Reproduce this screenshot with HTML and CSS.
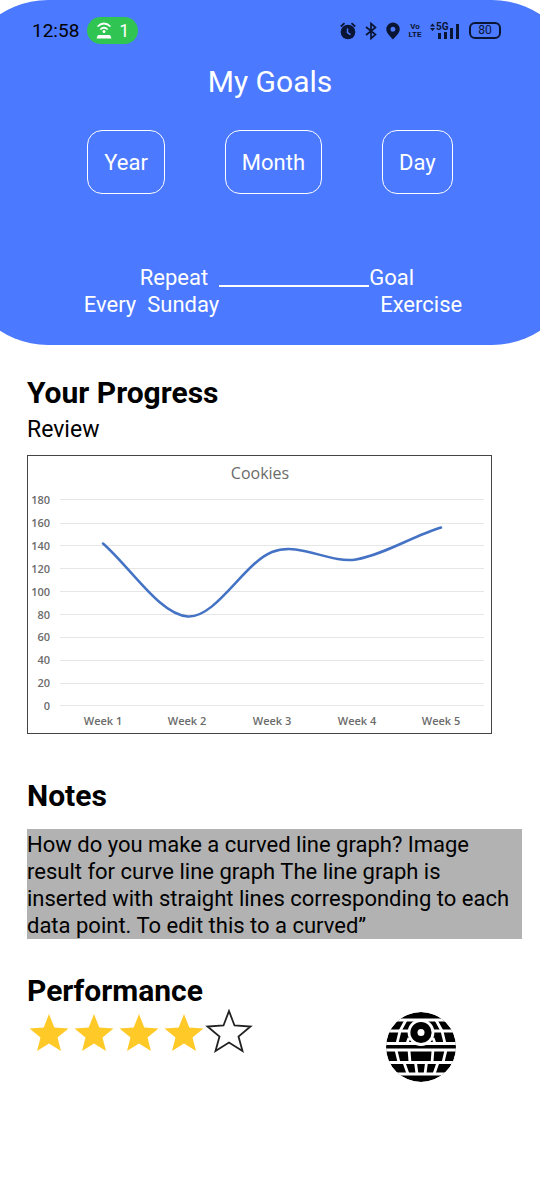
FILE: index.html
```html
<!DOCTYPE html>
<html lang="en">
<head>
<meta charset="utf-8">
<meta name="viewport" content="width=device-width, initial-scale=1">
<title>My Goals</title>
<link rel="stylesheet" href="styles.css">
</head>
<body>
<header class="hero">
  <div class="status">
    <span class="clock">12:58</span>
    <span class="hotspot">
      <svg width="16" height="17" viewBox="0 0 16 17" fill="none" stroke="#fff" stroke-width="1.700" aria-hidden="true">
        <path d="M1.500 4.500Q8-1.500 14.500 4.500M4.300 7.500Q8 4 11.700 7.500"/>
        <circle cx="8" cy="9.500" r="1.500" fill="#fff" stroke="none"/>
        <path d="M2 13h12l1.500 3.500H.5Z" fill="#fff" stroke="none"/>
      </svg>
      <span>1</span>
    </span>
    <div class="indicators">
      <svg width="16" height="18" viewBox="0 0 16 18" aria-hidden="true">
        <circle cx="8" cy="10" r="7.300" fill="#0a1533"/>
        <path d="M.8 4.500 4.500 1.200M15.200 4.500 11.500 1.200" stroke="#0a1533" stroke-width="1.800"/>
        <path d="M7.500 6.500v4l3 2.200" fill="none" stroke="#4b79ff" stroke-width="1.500"/>
      </svg>
      <svg width="12" height="18" viewBox="0 0 12 18" aria-hidden="true">
        <path d="M1 5 10.500 12.500 6 16.500V1.500L10.500 5.500 1 13" fill="none" stroke="#0a1533" stroke-width="1.700"/>
      </svg>
      <svg width="14" height="18" viewBox="0 0 14 18" aria-hidden="true">
        <path d="M7 .5a6.700 6.700 0 0 1 6.700 6.700C13.700 11 10 14 7 17.500 4 14 .3 11 .3 7.200A6.700 6.700 0 0 1 7 .5Zm0 4.200a2.500 2.500 0 1 0 0 5 2.500 2.500 0 0 0 0-5Z" fill="#0a1533"/>
      </svg>
      <span class="volte"><span>Vo</span><span>LTE</span></span>
      <svg class="signal" width="30" height="18" viewBox="0 0 30 18" aria-hidden="true">
        <path d="M0 4.500 2.500 1.500 5 4.500ZM0 6 2.500 9 5 6Z" fill="#0a1533"/>
        <text x="6" y="8">5G</text>
        <path d="M8 11h3v6H8ZM14 10h3v7h-3ZM20 6h3v11h-3ZM26 2h3v15h-3Z" fill="#0a1533"/>
      </svg>
      <span class="battery">80</span>
    </div>
  </div>
  <h1 class="title">My Goals</h1>
  <nav class="periods" aria-label="Period">
    <button class="period" type="button">Year</button>
    <button class="period" type="button">Month</button>
    <button class="period" type="button">Day</button>
  </nav>
  <div class="plan">
    <div class="plan-repeat"><div class="plan-label">Repeat</div><div>Every&nbsp; Sunday</div></div>
    <div class="plan-line"></div>
    <div><div>Goal</div><div class="plan-value">Exercise</div></div>
  </div>
</header>

<main class="content">
  <section class="progress">
    <h2 class="heading">Your Progress</h2>
    <p class="review">Review</p>
    <svg class="chart" viewBox="0 0 463 277" role="img" aria-label="Cookies by week">
      <path class="grid" d="M32 43.500H456M32 67.500H456M32 89.500H456M32 112.500H456M32 135.500H456M32 158.500H456M32 181.500H456M32 204.500H456M32 227.500H456M32 249.500H456"/>
      <text class="chart-title" x="232" y="23">Cookies</text>
      <g class="values">
        <text x="22" y="48">180</text><text x="22" y="71">160</text><text x="22" y="94">140</text><text x="22" y="117">120</text><text x="22" y="140">100</text><text x="22" y="163">80</text><text x="22" y="185">60</text><text x="22" y="208">40</text><text x="22" y="231">20</text><text x="22" y="254">0</text>
      </g>
      <g class="weeks">
        <text x="75" y="269">Week 1</text><text x="159" y="269">Week 2</text><text x="244" y="269">Week 3</text><text x="329" y="269">Week 4</text><text x="413" y="269">Week 5</text>
      </g>
      <path class="curve" d="M75 87.500C103 112 132 159 160 160.500S216 107 244 96 301 108 328 103.500 385 80 413 71.500"/>
    </svg>
  </section>

  <section class="notes">
    <h2 class="heading">Notes</h2>
    <p class="note">How do you make a curved line graph? Image result for curve line graph The line graph is inserted with straight lines corresponding to each data point. To edit this to a curved”</p>
  </section>

  <section class="performance">
    <h2 class="heading">Performance</h2>
    <div class="score">
      <svg width="226" height="46" viewBox="0 0 226 46" role="img" aria-label="4 out of 5 stars">
        <defs><path id="star" d="M0-20 5.300-6.500 19.500-5.500 8.500 3.500 12 17 0 9.500-12 17-8.500 3.500-19.500-5.500-5.300-6.500Z"/></defs>
        <g fill="#ffc928">
          <use href="#star" x="22" y="25"/><use href="#star" x="67" y="25"/><use href="#star" x="112" y="25"/><use href="#star" x="157" y="25"/>
        </g>
        <path d="M202 2 207.500 16.500 223.500 17.500 211.500 27.500 215.500 42 202 33.500 188.500 42 192.500 27.500 180.500 17.500 196.500 16.500Z" fill="none" stroke="#222" stroke-width="1.800"/>
      </svg>
      <button class="station" type="button" aria-label="Home">
        <svg width="72" height="72" viewBox="-36 -36 72 72" aria-hidden="true">
          <defs><clipPath id="disc"><circle r="35"/></clipPath></defs>
          <g clip-path="url(#disc)">
            <circle r="35" fill="#000"/>
            <g fill="none" stroke="#fff" stroke-width="2.800">
              <path d="M-36-27H36M-36-16H36M-36-3.500H36M-36 3H36M-36 15.500H36M-36 27H36"/>
              <path d="M-15-27-21-16M15-27 21-16M-21-16-24-3.500M21-16 24-3.500M-12-9-14-3.500M12-9 14-3.500M-25 3-22 15.500M25 3 22 15.500M-12 3-11 15.500M12 3 11 15.500M-17 15.500-13 27M17 15.500 13 27M-5.500 15.500-4 27M5.500 15.500 4 27"/>
            </g>
            <circle cy="-14.500" r="12" fill="#000" stroke="#fff" stroke-width="2.800"/>
            <circle cy="-14.500" r="3.500" fill="#fff"/>
          </g>
        </svg>
      </button>
    </div>
  </section>
</main>
</body>
</html>
```
FILE: styles.css
```css
* { box-sizing: border-box; }

body {
  margin: 0;
  background: #fff;
  color: #000;
  font-family: Roboto, "Liberation Sans", sans-serif;
  font-size: 22px;
  line-height: 27px;
}

h1, h2, p { margin: 0; }

/* The rounded shape is wider than the page, so only part of each corner shows. */
.hero {
  padding: 17px 0 27px;
  background: #4b79ff;
  color: #fff;
  clip-path: inset(0 -40px round 88px);
}

.status {
  display: flex;
  align-items: center;
  padding: 0 39px 0 32px;
  color: #0a1533;
}

.clock { font-size: 19px; color: #000; }

.hotspot {
  display: flex;
  align-items: center;
  gap: 7px;
  height: 27px;
  margin-left: 8px;
  padding: 0 9px;
  border-radius: 14px;
  background: #30c552;
  color: #fff;
  font-size: 18px;
}

.indicators {
  display: flex;
  align-items: center;
  gap: 9px;
  margin-left: auto;
}

.volte {
  display: grid;
  width: 12px;
  justify-content: center;
  font: bold 8px/8px Roboto, sans-serif;
  text-align: center;
}

.signal text { font: bold 10px Roboto, sans-serif; fill: #0a1533; }

.battery {
  width: 32px;
  border: 2px solid #0a1533;
  border-radius: 6px;
  font-size: 12px;
  line-height: 13px;
  text-align: center;
}

.title {
  margin-top: 20px;
  font-size: 30px;
  font-weight: 400;
  line-height: 36px;
  text-align: center;
}

.periods {
  display: flex;
  justify-content: center;
  gap: 60px;
  margin-top: 30px;
}

.period {
  height: 64px;
  padding: 0 16px;
  border: 1px solid #fff;
  border-radius: 15px;
  background: none;
  color: inherit;
  font: inherit;
}

.plan {
  display: flex;
  justify-content: center;
  margin-top: 70px;
  padding-left: 6px;
}

.plan-repeat { text-align: right; }
.plan-label { padding-right: 11px; }
.plan-line { width: 150px; height: 23px; border-bottom: 2px solid #fff; }
.plan-value { padding-left: 11px; }

.content { padding: 30px 18px 30px 27px; }

.heading { font-size: 30px; font-weight: 700; line-height: 36px; }

.review { margin-top: 5px; font-size: 23px; }

.chart {
  display: block;
  width: calc(100% - 30px);
  margin-top: 12px;
  border: 1px solid #444;
  font-family: "Open Sans", "Noto Sans", sans-serif;
  fill: #6b6b6b;
}

.chart-title { font-size: 16px; text-anchor: middle; }
.values { font-size: 11px; font-weight: 600; text-anchor: end; }
.weeks { font-size: 11px; font-weight: 600; text-anchor: middle; }
.grid { stroke: #e6e6e6; stroke-width: 1; }
.curve { fill: none; stroke: #4472c4; stroke-width: 2.5; stroke-linecap: round; }

.notes { margin-top: 44px; }

.note {
  margin-top: 15px;
  padding: 2px 0 0;
  background: #b2b2b2;
}

.performance { margin-top: 34px; }

.score { display: flex; align-items: flex-start; }

.station {
  display: flex;
  margin: 2px 0 0 132px;
  padding: 0;
  border: 0;
  background: none;
}
```
